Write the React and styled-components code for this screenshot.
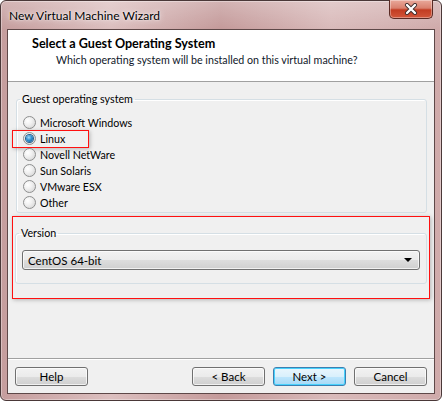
import React from 'react';
import styled, { createGlobalStyle } from 'styled-components';

const Global = createGlobalStyle`
  html, body {
    margin: 0;
    padding: 0;
    background: #ffffff;
  }
  body {
    font-family: Lato, "Noto Sans", "Liberation Sans", sans-serif;
    font-size: 10.7px;
    color: #000;
  }
`

const Window = styled.div`
  width: 442px;
  height: 401px;
  box-sizing: border-box;
  border: 1px solid #4a3838;
  border-radius: 6px;
  padding: 0 6px 6px 6px;
  display: flex;
  flex-direction: column;
  background:
    linear-gradient(to bottom, rgba(255,255,255,0.25), rgba(255,255,255,0) 28px),
    linear-gradient(to right, #c59d9d 0%, #dcbfbf 25%, #c49a9a 50%, #d9baba 75%, #cfaaaa 100%);
  box-shadow: inset 0 0 0 1px rgba(255,255,255,0.35);
`

const TitleBar = styled.div`
  height: 28px;
  display: flex;
  align-items: flex-start;
  padding-left: 2px;
`

const TitleText = styled.div`
  align-self: center;
  font-size: 12px;
  color: #000;
  text-shadow: 0 0 6px rgba(255,255,255,0.9), 0 0 2px rgba(255,255,255,0.9);
`

const CloseButton = styled.div`
  margin-left: auto;
  margin-right: 2px;
  margin-top: -1px;
  width: 44px;
  height: 19px;
  box-sizing: border-box;
  border: 1px solid #5a2a24;
  border-top: none;
  border-radius: 0 0 5px 5px;
  background: linear-gradient(to bottom, #e9a99b 0%, #d9806e 45%, #c23c22 55%, #d2563a 100%);
  box-shadow: inset 0 0 0 1px rgba(255,255,255,0.35);
  display: flex;
  align-items: center;
  justify-content: center;
`

const Client = styled.div`
  flex: 1;
  display: flex;
  flex-direction: column;
  border: 1px solid #5e4848;
  background: #f0f0f0;
`

const Header = styled.div`
  height: 52px;
  box-sizing: border-box;
  background: #fff;
  border-bottom: 1px solid #a0a0a0;
  padding: 6px 0 0 24px;
`

const HeaderTitle = styled.div`
  font-weight: bold;
  font-size: 12.6px;
  line-height: 16px;
`

const HeaderSub = styled.div`
  line-height: 16px;
  padding-left: 24px;
  color: #10182a;
`

const Body = styled.div`
  flex: 1;
  display: flex;
  flex-direction: column;
  padding: 9px 7px 0 8px;
`

const Group = styled.fieldset`
  margin: 0;
  padding: 0 6px 2px 5px;
  border: 1px solid #d5dfe5;
  border-radius: 3px;
  box-shadow: inset 1px 1px 0 #fff;
  min-width: 0;
`

const Legend = styled.legend`
  padding: 0 2px;
  margin-left: -2px;
  line-height: 16px;
`

const RadioList = styled.div`
  display: flex;
  flex-direction: column;
  padding-top: 7px;
  padding-left: 1px;
`

const RadioRow = styled.div`
  position: relative;
  display: flex;
  align-items: center;
  gap: 4px;
  height: 16px;

  &::before {
    content: '';
    display: ${p => (p.$marked ? 'block' : 'none')};
    position: absolute;
    left: -11px;
    top: 0;
    width: 75px;
    height: 16px;
    border: 1px solid #ff1010;
    box-shadow: 1px 1px 4px rgba(0,0,0,0.25);
  }
`

const RadioDot = styled.span`
  width: 13px;
  height: 13px;
  box-sizing: border-box;
  border-radius: 50%;
  border: 1px solid #8e8f8f;
  background: radial-gradient(circle at 35% 35%, #ffffff 0%, #f0f0f0 40%, #cfcfcf 100%);
  display: flex;
  align-items: center;
  justify-content: center;

  &::after {
    content: '';
    display: ${p => (p.$checked ? 'block' : 'none')};
    width: 7px;
    height: 7px;
    border-radius: 50%;
    background: radial-gradient(circle at 40% 35%, #a8dcf8 0%, #2f8fd0 45%, #0d4f86 100%);
    box-shadow: 0 0 0 1px #235c8c;
  }
`

const Callout = styled.div`
  margin: 3px -3px 0 -4px;
  padding: 8px 2px 14px 2px;
  border: 1px solid #ff1010;
  box-shadow: 1px 1px 4px rgba(0,0,0,0.25);
`

const VersionBody = styled.div`
  padding: 9px 0 11px 1px;
`

const Combo = styled.div`
  height: 20px;
  box-sizing: border-box;
  border: 1px solid #707070;
  border-radius: 3px;
  background: linear-gradient(to bottom, #f2f2f2 0%, #ebebeb 50%, #dddddd 51%, #cfcfcf 100%);
  box-shadow: inset 0 0 0 1px rgba(255,255,255,0.7);
  display: flex;
  align-items: center;
  padding: 0 7px 0 5px;
  font-size: 11.5px;
`

const ComboText = styled.span`
  flex: 1;
`

const Arrow = styled.span`
  width: 0;
  height: 0;
  border-left: 4px solid transparent;
  border-right: 4px solid transparent;
  border-top: 4px solid #000;
`

const Footer = styled.div`
  border-top: 1px solid #a0a0a0;
  box-shadow: inset 0 1px 0 #fff;
  display: flex;
  gap: 8px;
  padding: 8px 7px 7px 7px;
`

const Button = styled.div`
  width: 73px;
  height: 19px;
  box-sizing: border-box;
  border: 1px solid ${p => (p.$default ? '#3c7fb1' : '#707070')};
  border-radius: 3px;
  font-size: 11.5px;
  background: ${p =>
    p.$default
      ? 'linear-gradient(to bottom, #eaf6fd 0%, #d9f0fc 50%, #bee6fd 51%, #a7d9f5 100%)'
      : 'linear-gradient(to bottom, #f2f2f2 0%, #ebebeb 50%, #dddddd 51%, #cfcfcf 100%)'};
  box-shadow: inset 0 0 0 1px ${p => (p.$default ? '#48d2fd' : 'rgba(255,255,255,0.7)')};
  display: flex;
  align-items: center;
  justify-content: center;
  margin-left: ${p => (p.$push ? 'auto' : '0')};
`

const options = ['Microsoft Windows', 'Linux', 'Novell NetWare', 'Sun Solaris', 'VMware ESX', 'Other']

const App = () => {
  return (
    <>
      <Global />
      <Window>
        <TitleBar>
          <TitleText>New Virtual Machine Wizard</TitleText>
          <CloseButton>
            <svg width="14" height="12" viewBox="0 0 14 12">
              <path d="M3 2 L11 10 M11 2 L3 10" stroke="#3a2a2a" strokeWidth="4" strokeLinecap="round" />
              <path d="M3 2 L11 10 M11 2 L3 10" stroke="#fff" strokeWidth="2.4" strokeLinecap="round" />
            </svg>
          </CloseButton>
        </TitleBar>
        <Client>
          <Header>
            <HeaderTitle>Select a Guest Operating System</HeaderTitle>
            <HeaderSub>Which operating system will be installed on this virtual machine?</HeaderSub>
          </Header>
          <Body>
            <Group>
              <Legend>Guest operating system</Legend>
              <RadioList>
                {options.map(o => (
                  <RadioRow key={o} $marked={o === 'Linux'}>
                    <RadioDot $checked={o === 'Linux'} />
                    {o}
                  </RadioRow>
                ))}
              </RadioList>
            </Group>
            <Callout>
              <Group>
                <Legend>Version</Legend>
                <VersionBody>
                  <Combo>
                    <ComboText>CentOS 64-bit</ComboText>
                    <Arrow />
                  </Combo>
                </VersionBody>
              </Group>
            </Callout>
          </Body>
          <Footer>
            <Button>Help</Button>
            <Button $push>&lt; Back</Button>
            <Button $default>Next &gt;</Button>
            <Button>Cancel</Button>
          </Footer>
        </Client>
      </Window>
    </>
  )
}

export default App
